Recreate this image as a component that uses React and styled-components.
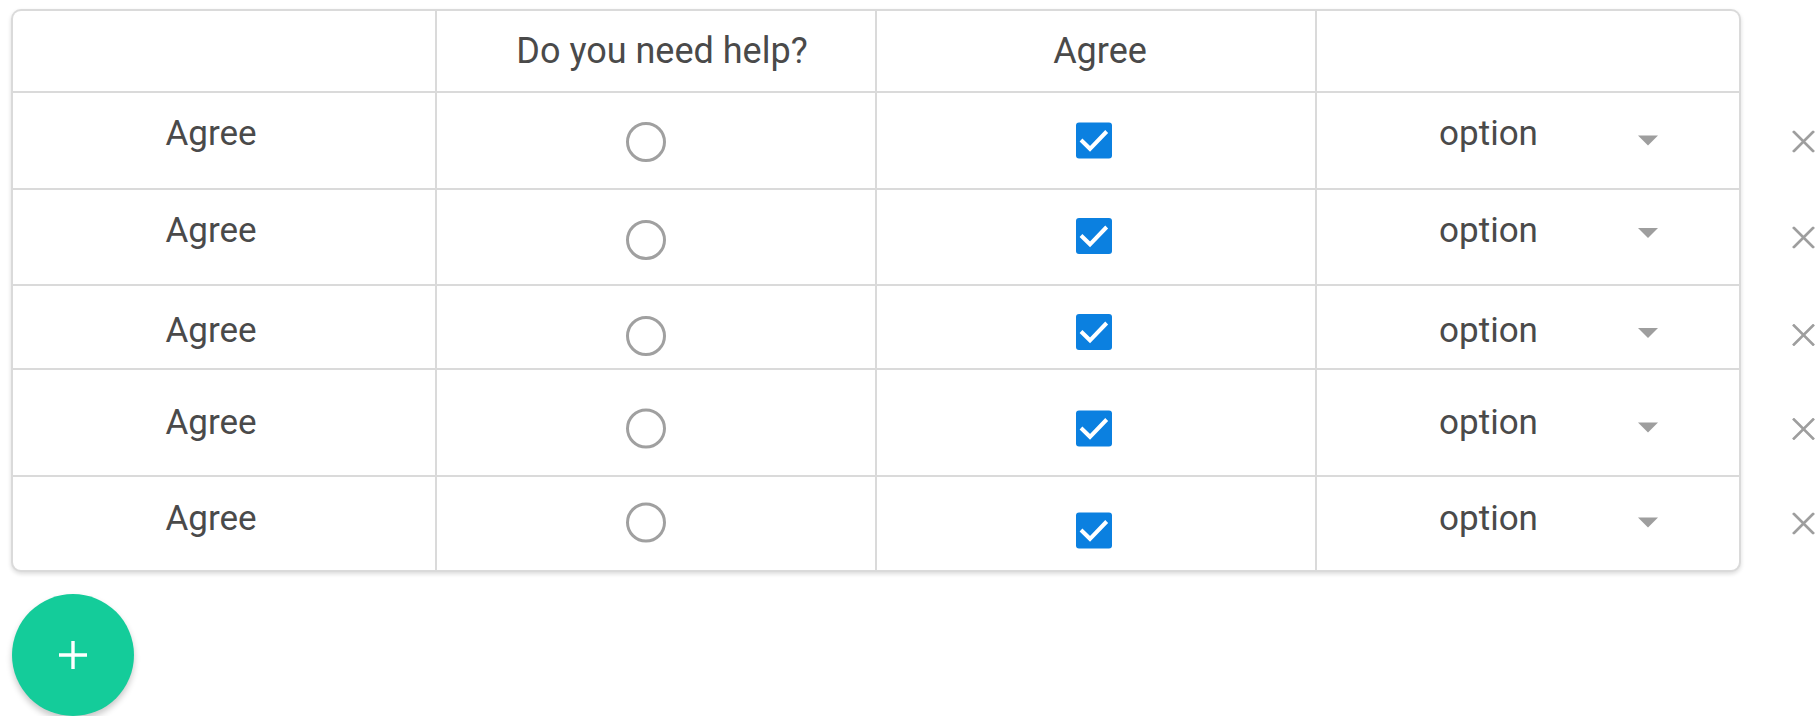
import React from 'react';
import styled, { createGlobalStyle } from 'styled-components';

const GlobalStyle = createGlobalStyle`
  html, body {
    margin: 0;
    padding: 0;
    background: #ffffff;
    font-family: Roboto, 'Liberation Sans', Arial, sans-serif;
  }
`;

const rows = [
  { h: 95, text: -7, radio: 1, check: -0.5, arrow: -0.5, close: 0.5 },
  { h: 94, text: -7, radio: 3, check: -1, arrow: -4, close: 0.5 },
  { h: 82, text: 3, radio: 9, check: 5, arrow: 6, close: 8 },
  { h: 105, text: 0, radio: 5.5, check: 5.5, arrow: 4.5, close: 6 },
  { h: 93, text: -5.5, radio: -1.5, check: 6.5, arrow: -1.5, close: -0.5 },
];

const Page = styled.div`
  padding: 9px 0 0 11px;
  display: flex;
  flex-direction: column;
  align-items: flex-start;
`;

const TableRow = styled.div`
  display: flex;
  align-items: flex-start;
`;

const Card = styled.div`
  display: grid;
  grid-template-columns: 422px 438px 438px 422px;
  grid-template-rows: ${(props) => props.$rows};
  gap: 2px;
  background: #dadada;
  border: 2px solid #dadada;
  border-radius: 10px;
  overflow: hidden;
  box-shadow: 0 2px 4px rgba(0, 0, 0, 0.14);
`;

const Cell = styled.div`
  background: #ffffff;
  display: flex;
  align-items: center;
  justify-content: center;
  padding-left: ${(props) => props.$pl || 0}px;
  padding-right: ${(props) => props.$pr || 0}px;
  box-sizing: border-box;
  min-width: 0;
`;

const Label = styled.span`
  font-size: ${(props) => props.$size || 35}px;
  line-height: normal;
  color: #4a4a4a;
  white-space: nowrap;
  transform: translateY(${(props) => props.$dy || 0}px);
`;

const Radio = styled.span`
  width: 40px;
  height: 40px;
  box-sizing: border-box;
  border: 3.5px solid #a0a0a0;
  border-radius: 50%;
  transform: translateY(${(props) => props.$dy}px);
`;

const CheckBox = styled.span`
  width: 36px;
  height: 36px;
  border-radius: 3px;
  background: #0b80e0;
  display: flex;
  transform: translateY(${(props) => props.$dy}px);
`;

const Select = styled.div`
  width: 343px;
  display: flex;
  align-items: center;
  margin-right: auto;
`;

const SelectText = styled(Label)`
  flex: 1;
  text-align: center;
  padding-left: 22px;
`;

const Arrow = styled.span`
  width: 0;
  height: 0;
  border-left: 10px solid transparent;
  border-right: 10px solid transparent;
  border-top: 10px solid #9e9e9e;
  margin-right: 2px;
  transform: translateY(${(props) => props.$dy}px);
`;

const CloseColumn = styled.div`
  display: flex;
  flex-direction: column;
  gap: 2px;
  padding-top: 2px;
  margin-left: 51px;
`;

const CloseSpacer = styled.div`
  height: 80px;
`;

const CloseCell = styled.div`
  height: ${(props) => props.$h}px;
  display: flex;
  align-items: center;
`;

const CloseButton = styled.span`
  width: 23px;
  height: 22px;
  display: flex;
  transform: translateY(${(props) => props.$dy}px);
`;

const Fab = styled.button`
  margin: 22px 0 0 1px;
  width: 122px;
  height: 122px;
  border-radius: 50%;
  border: none;
  padding: 0;
  background: #14cc9a;
  display: flex;
  align-items: center;
  justify-content: center;
  box-shadow: 0 4px 6px rgba(0, 0, 0, 0.22);
  cursor: pointer;
`;

const Check = () => (
  <svg width="36" height="36" viewBox="0 0 36 36">
    <path d="M5 17.5 L14 26.3 L30.7 9" fill="none" stroke="#ffffff" strokeWidth="4" />
  </svg>
);

const Cross = () => (
  <svg width="23" height="22" viewBox="0 0 23 22">
    <path d="M1 0.5 L22 21.5 M22 0.5 L1 21.5" stroke="#9e9e9e" strokeWidth="2.6" />
  </svg>
);

const Plus = () => (
  <svg width="28" height="28" viewBox="0 0 28 28">
    <path d="M14 0 V28 M0 14 H28" stroke="#ffffff" strokeWidth="3.4" />
  </svg>
);

const App = () => (
  <>
    <GlobalStyle />
    <Page>
      <TableRow>
        <Card $rows={`80px ${rows.map((r) => `${r.h}px`).join(' ')}`}>
          <Cell />
          <Cell $pl={12}>
            <Label $size={36}>Do you need help?</Label>
          </Cell>
          <Cell $pl={8}>
            <Label $size={36}>Agree</Label>
          </Cell>
          <Cell />
          {rows.map((row, i) => (
            <React.Fragment key={i}>
              <Cell $pr={26}>
                <Label $dy={row.text}>Agree</Label>
              </Cell>
              <Cell $pr={20}>
                <Radio $dy={row.radio} />
              </Cell>
              <Cell $pr={4}>
                <CheckBox $dy={row.check}>
                  <Check />
                </CheckBox>
              </Cell>
              <Cell>
                <Select>
                  <SelectText $dy={row.text}>option</SelectText>
                  <Arrow $dy={row.arrow} />
                </Select>
              </Cell>
            </React.Fragment>
          ))}
        </Card>
        <CloseColumn>
          <CloseSpacer />
          {rows.map((row, i) => (
            <CloseCell key={i} $h={row.h}>
              <CloseButton $dy={row.close}>
                <Cross />
              </CloseButton>
            </CloseCell>
          ))}
        </CloseColumn>
      </TableRow>
      <Fab aria-label="add">
        <Plus />
      </Fab>
    </Page>
  </>
);

export default App;
